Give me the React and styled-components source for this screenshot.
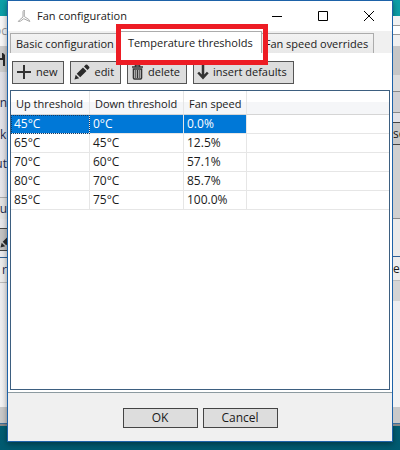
import React, { useState } from "react";
import styled, { createGlobalStyle, css } from "styled-components";

const GlobalStyle = createGlobalStyle`
  * {
    box-sizing: border-box;
  }

  body {
    margin: 0;
    font-family: "Open Sans", "Noto Sans", sans-serif;
    font-size: 11px;
    line-height: 16px;
    color: #1a1a1a;
    background: linear-gradient(#0ca0a8, #005a70);
  }

  button {
    font: inherit;
    color: inherit;
  }
`;

const THRESHOLDS = [
  { up: "45°C", down: "0°C", speed: "0.0%" },
  { up: "65°C", down: "45°C", speed: "12.5%" },
  { up: "70°C", down: "60°C", speed: "57.1%" },
  { up: "80°C", down: "70°C", speed: "85.7%" },
  { up: "85°C", down: "75°C", speed: "100.0%" },
];

const TABS = [
  "Basic configuration",
  "Temperature thresholds",
  "Fan speed overrides",
];

const Desktop = styled.div`
  display: grid;
  grid-template-columns: 7px minmax(0, 1fr) 7px;
  min-height: 100vh;
`;

const Behind = styled.div`
  display: flex;
  flex-direction: column;
  margin: 16px 0 24px;
  overflow: hidden;
  background: linear-gradient(#dcdce4, #f4f4f4);
  border-bottom: 2px solid #888;
`;

const Strip = styled.div`
  display: flex;
  flex: none;
  align-items: center;
  justify-content: ${({ $end }) => ($end ? "flex-end" : "flex-start")};
  height: ${({ $height }) => $height}px;
  font-size: 12px;
  white-space: nowrap;
  color: ${({ $color }) => $color || "#1b2a4c"};
  background: ${({ $bg }) => $bg || "transparent"};
  border-bottom: ${({ $line }) => ($line ? `1px solid ${$line}` : "none")};

  svg {
    flex: none;
  }
`;

const Filler = styled.div`
  flex: 1;
`;

const Dialog = styled.main`
  display: flex;
  flex-direction: column;
  margin-bottom: 8px;
  background: #fff;
  border: 1px solid #1d62a8;
  box-shadow: 0 2px 6px rgba(0, 0, 0, 0.4);
`;

const TitleBar = styled.header`
  display: flex;
  align-items: center;
  height: 30px;
  padding-left: 8px;

  h1 {
    flex: 1;
    margin: 0 0 0 5px;
    font-size: 11px;
    font-weight: 400;
  }
`;

const CaptionButton = styled.button`
  display: flex;
  align-items: center;
  justify-content: center;
  width: 46px;
  height: 28px;
  padding: 0;
  border: 0;
  background: none;
`;

const Tabs = styled.div`
  display: flex;
  align-items: flex-end;
  height: 22px;
  padding-left: 2px;
  background: #f0f0f0;
`;

const Tab = styled.button`
  height: 20px;
  padding: 0 5px;
  white-space: nowrap;
  background: linear-gradient(#f3f3f3, #e8e8e8);
  border: 1px solid #acacac;
  border-bottom: 0;

  & + & {
    padding-left: 3px;
  }

  ${({ $active }) =>
    $active &&
    css`
      && {
        position: relative;
        z-index: 1;
        height: 22px;
        padding: 0 8px;
        margin: 0 -1px;
        background: #fff;
      }

      &::after {
        content: "";
        position: absolute;
        inset: -8px -7px -12px -4px;
        border: 5px solid #ed1c24;
        pointer-events: none;
      }
    `}
`;

const Toolbar = styled.div`
  display: flex;
  gap: 6px;
  padding: 8px 4px 6px;
`;

const ToolButton = styled.button`
  display: flex;
  align-items: center;
  gap: 4px;
  height: 23px;
  padding: 0 6px 1px 3px;
  white-space: nowrap;
  background: #ddd;
  border: 1px solid #555;
`;

const GridFrame = styled.div`
  flex: 1;
  margin: 0 2px 2px;
  border: 1px solid #3d5f80;
`;

const Table = styled.table`
  width: 100%;
  table-layout: fixed;
  border-collapse: separate;
  border-spacing: 0;

  th,
  td {
    padding: 0 3px;
    text-align: left;
    font-weight: 400;
    white-space: nowrap;
    border-right: 1px solid #e6e6e6;
    border-bottom: 1px solid #e6e6e6;
  }

  th {
    height: 24px;
    padding: 3px 0 0 5px;
    background: linear-gradient(#fff 50%, #f5f6f8 50%);
    border-bottom-color: #d5d5d5;
  }

  td {
    height: 19px;
    font-size: 12px;
  }

  th:last-child,
  td:last-child {
    border-right: 0;
  }
`;

const Row = styled.tr`
  ${({ $selected }) =>
    $selected &&
    css`
      color: #fff;

      td:not(:last-child) {
        background: #0078d7;
      }

      td:first-child {
        outline: 1px dotted #103a66;
        outline-offset: -1px;
      }
    `}
`;

const Footer = styled.footer`
  display: flex;
  align-items: center;
  justify-content: center;
  gap: 5px;
  height: 49px;
  padding-top: 2px;
  background: #f0f0f0;
  border-top: 1px solid #8c9aa0;
`;

const FooterButton = styled.button`
  width: 75px;
  height: 20px;
  padding: 0;
  font-size: 12px;
  background: #ddd;
  border: 1px solid #444;
`;

const FanIcon = () => (
  <svg width="16" height="16" viewBox="0 0 16 16" fill="none" stroke="#a8a8a8">
    <path d="M7 9V3.500L8.300 2v6.500l4.500 3 1 2-6-2.800-3.500 2.500-2 .3 1.200-1.500z" />
  </svg>
);

const PlusIcon = () => (
  <svg width="16" height="16" viewBox="0 0 16 16" stroke="#333" strokeWidth="2">
    <path d="M8 1v14M1 8h14" />
  </svg>
);

const PencilIcon = () => (
  <svg width="16" height="16" viewBox="0 0 16 16" fill="#2b2b2b">
    <path d="M0.500 15.500l1.200-4.700 3.500 3.500zM2.700 9.800l6.300-6.300 3.500 3.500-6.300 6.300zM10 2.500l1.700-1.700q.8-.6 1.600 0l1.900 1.900q.6.800 0 1.600L13.500 6z" />
  </svg>
);

const TrashIcon = () => (
  <svg width="13" height="16" viewBox="0 0 13 16" fill="none" stroke="#333">
    <path d="M1 3h11M4.500 2.500V1h4v1.500" strokeWidth="1.600" />
    <path d="M2.500 5v9q0 1 1 1h6q1 0 1-1V5z" strokeWidth="1.600" />
    <path d="M4.800 6v8M6.500 6v8M8.200 6v8" />
  </svg>
);

const ArrowIcon = () => (
  <svg width="12" height="16" viewBox="0 0 12 16" fill="none" stroke="#333">
    <path d="M6 1v13M1.200 8.500L6 13.700l4.800-5.200" strokeWidth="2.500" />
  </svg>
);

const SaveIcon = () => (
  <svg width="5" height="13" viewBox="0 0 5 13" fill="#2b2b2b">
    <path d="M0 0h3l2 2v11H3V7H0V5h2V0z" />
  </svg>
);

const App = () => {
  const [tab, setTab] = useState(TABS[1]);
  const [selected, setSelected] = useState(0);

  return (
    <>
      <GlobalStyle />
      <Desktop>
        <Behind aria-hidden="true">
          <Strip $height={30} $bg="#f7f7f7" $color="#999" $end>oc</Strip>
          <Strip $height={26} $bg="#cdcdcd"><SaveIcon /></Strip>
          <Strip $height={62} $end>an</Strip>
          <Strip $height={2}>k</Strip>
          <Strip $height={56} $end>ut</Strip>
          <Strip $height={6} $line="#aaa" />
          <Strip $height={21} $bg="#e4e4e4" $end>gu</Strip>
          <Strip $height={10} $line="#444" />
          <Strip $height={22} $bg="#c4c4c4" $line="#444"><PencilIcon /></Strip>
          <Strip $height={7} $line="#2f5f95" />
          <Strip $height={25} $bg="#ececec" $line="#bbb" $end>r</Strip>
          <Filler />
          <Strip $height={17} $bg="#c9c9c9" $line="#3d6f9a" />
        </Behind>
        <Dialog>
          <TitleBar>
            <FanIcon />
            <h1>Fan configuration</h1>
            <CaptionButton aria-label="Minimize">
              <svg width="10" height="10" stroke="#000"><path d="M0 5.500h10" /></svg>
            </CaptionButton>
            <CaptionButton aria-label="Maximize">
              <svg width="10" height="10" stroke="#000" fill="none"><path d="M.5.500h9v9h-9z" /></svg>
            </CaptionButton>
            <CaptionButton aria-label="Close">
              <svg width="10" height="10" stroke="#000"><path d="M0 0l10 10M10 0L0 10" /></svg>
            </CaptionButton>
          </TitleBar>
          <Tabs role="tablist">
            {TABS.map((name) => (
              <Tab
                key={name}
                role="tab"
                aria-selected={name === tab}
                $active={name === tab}
                onClick={() => setTab(name)}
              >
                {name}
              </Tab>
            ))}
          </Tabs>
          <Toolbar>
            <ToolButton><PlusIcon />new</ToolButton>
            <ToolButton><PencilIcon />edit</ToolButton>
            <ToolButton><TrashIcon />delete</ToolButton>
            <ToolButton><ArrowIcon />insert defaults</ToolButton>
          </Toolbar>
          <GridFrame>
            <Table>
              <colgroup>
                <col width="79" />
                <col width="94" />
                <col width="63" />
                <col />
              </colgroup>
              <thead>
                <tr>
                  <th>Up threshold</th>
                  <th>Down threshold</th>
                  <th>Fan speed</th>
                  <th />
                </tr>
              </thead>
              <tbody>
                {THRESHOLDS.map((row, index) => (
                  <Row
                    key={row.up}
                    $selected={index === selected}
                    onClick={() => setSelected(index)}
                  >
                    <td>{row.up}</td>
                    <td>{row.down}</td>
                    <td>{row.speed}</td>
                    <td />
                  </Row>
                ))}
              </tbody>
            </Table>
          </GridFrame>
          <Footer>
            <FooterButton>OK</FooterButton>
            <FooterButton>Cancel</FooterButton>
          </Footer>
        </Dialog>
        <Behind aria-hidden="true">
          <Strip $height={10} $bg="#f2f2f2" $line="#999" />
          <Strip $height={9} $bg="#fff" $line="#999" />
          <Strip $height={11} $bg="#f0f0f0" />
          <Strip $height={29} $bg="#c6c6c6" />
          <Strip $height={17} $bg="#dcdcdc" $line="#888" />
          <Strip $height={21} $bg="#d0d0d4" $line="#888" />
          <Strip $height={10} $line="#444" />
          <Strip $height={22} $bg="#c8c8c8" $color="#1a1a1a" $line="#444">se</Strip>
          <Strip $height={74} $bg="#d0d0d0" $line="#888" />
          <Strip $height={38} $bg="#eaeaea" $line="#2f5f95" />
          <Strip $height={24} $bg="#ececec" $color="#1a1a1a" $line="#bbb">ex</Strip>
          <Strip $height={20} $bg="#d4d4d4" />
          <Filler />
          <Strip $height={17} $bg="#c9c9c9" $line="#3d6f9a" />
        </Behind>
      </Desktop>
    </>
  );
};

export default App;
